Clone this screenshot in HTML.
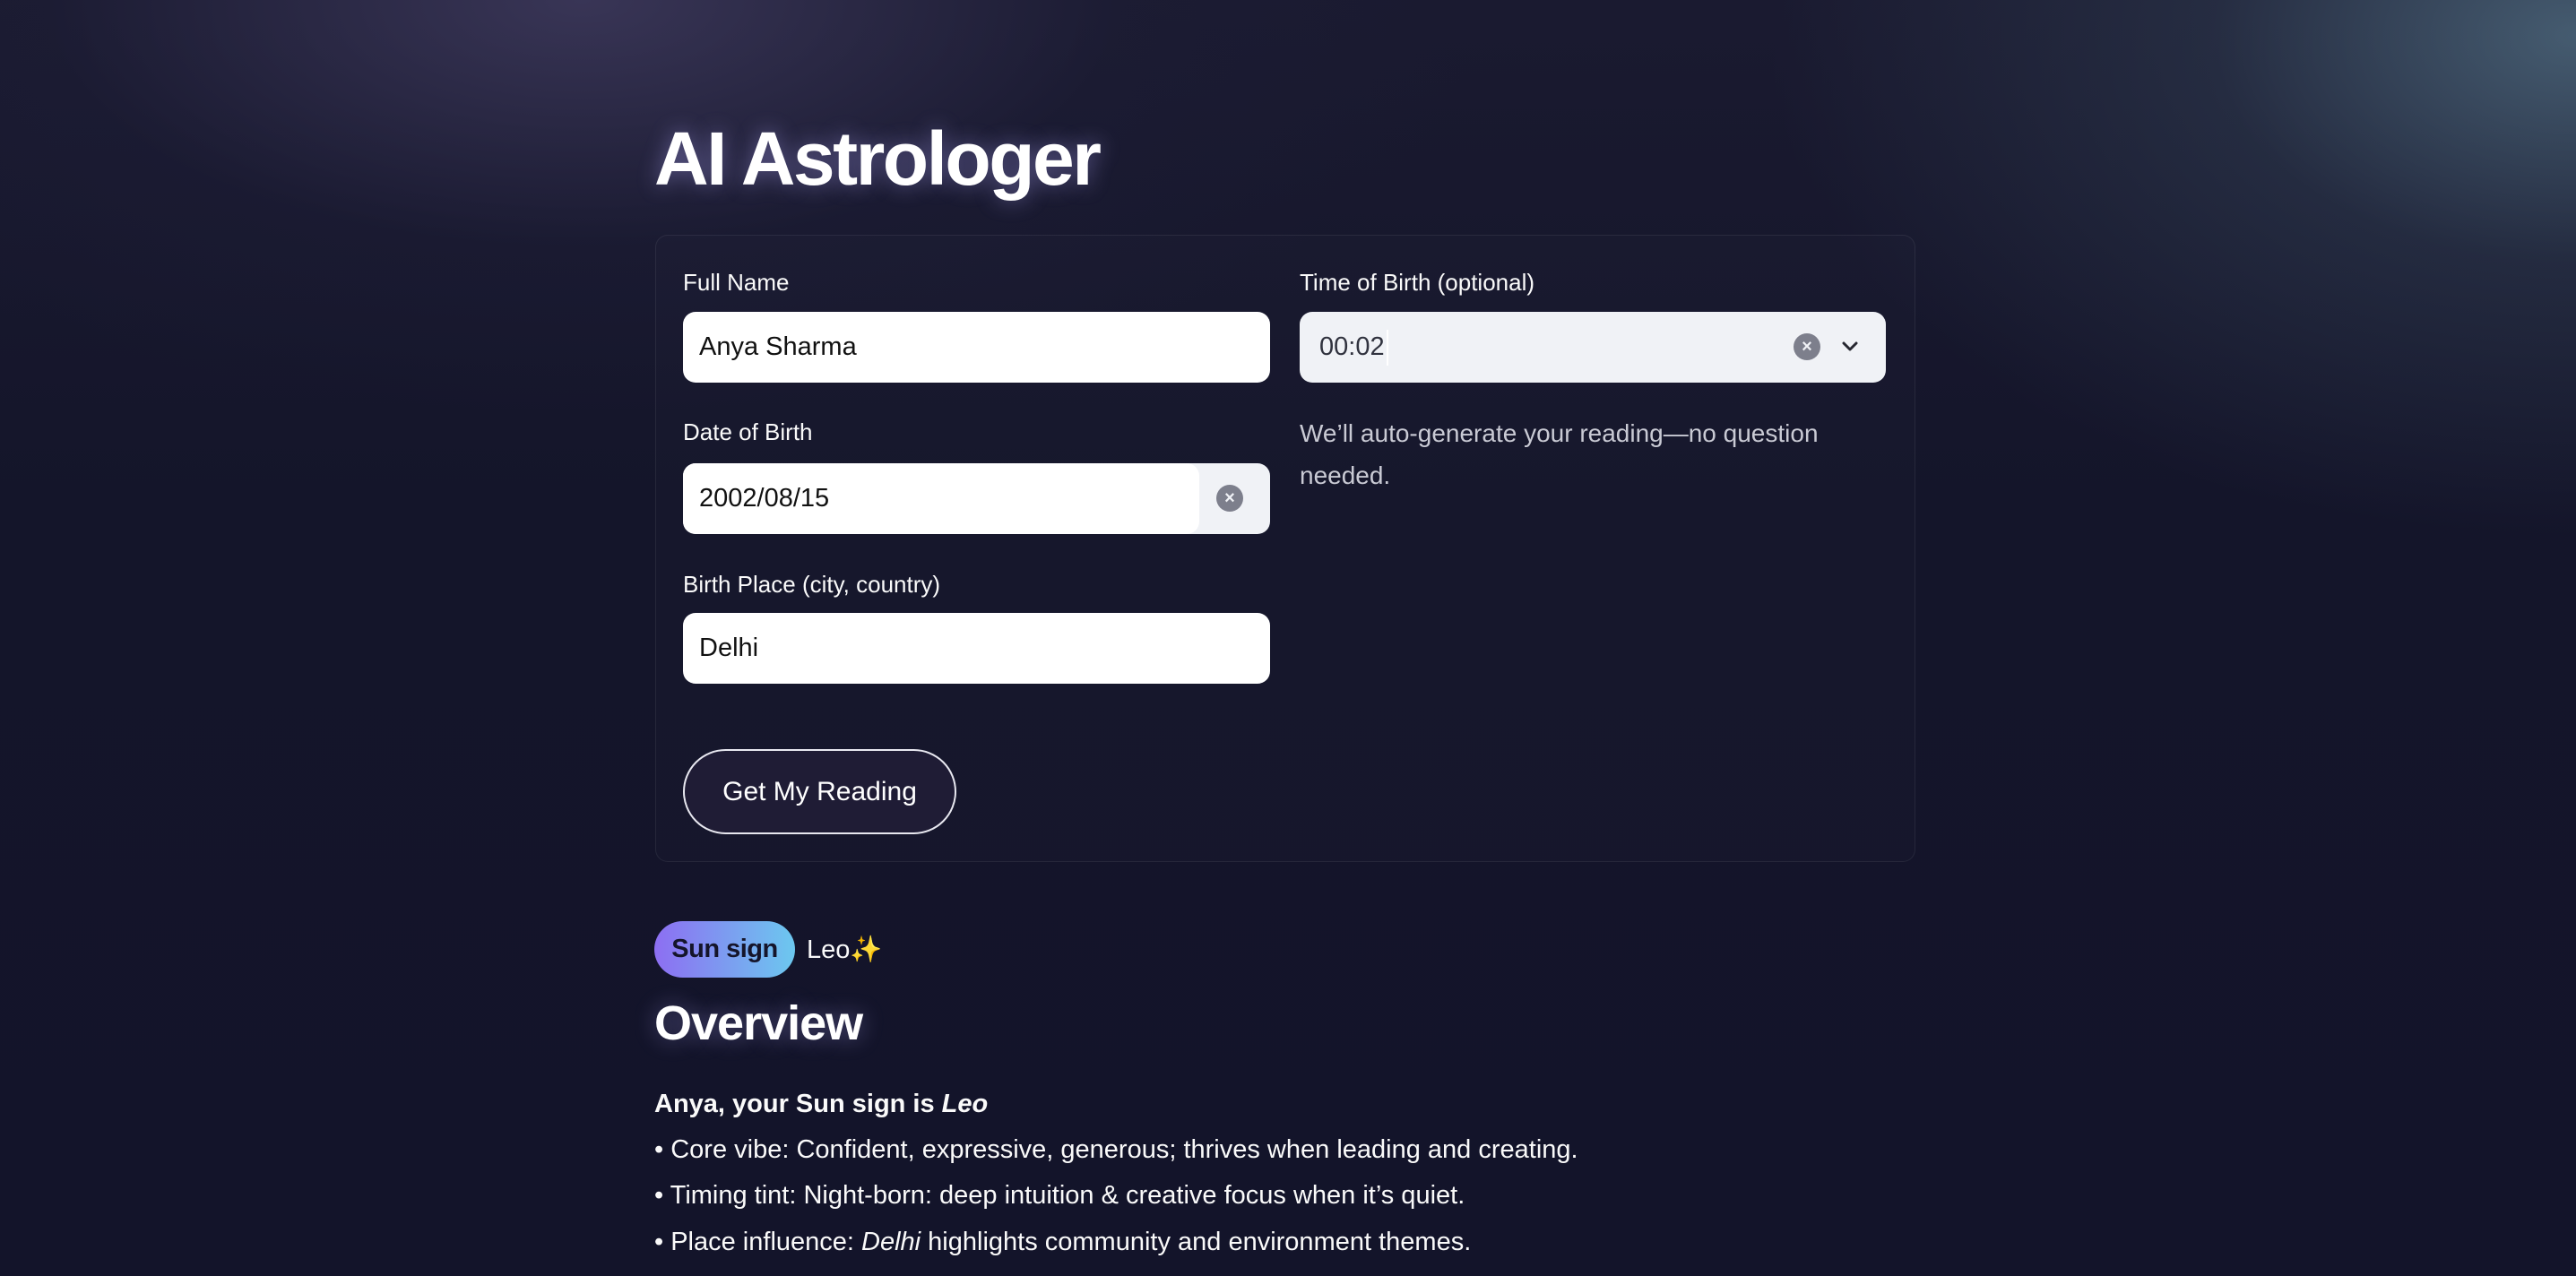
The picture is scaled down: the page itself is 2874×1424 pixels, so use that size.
<!DOCTYPE html>
<html><head><meta charset="utf-8"><style>
*{box-sizing:border-box;margin:0;padding:0}
html,body{width:2874px;height:1424px;overflow:hidden}
body{font-family:"Liberation Sans",sans-serif;color:#fff;
background:
radial-gradient(ellipse 900px 560px at 2874px 40px, rgba(80,108,128,.8), rgba(55,72,92,.4) 45%, rgba(20,22,40,0) 100%),
radial-gradient(ellipse 1000px 460px at 650px 0px, rgba(60,56,90,.9), rgba(30,30,55,.4) 60%, rgba(20,20,40,0) 100%),
linear-gradient(180deg,#1a1a30 0%,#14152a 40%,#13142a 100%);
position:relative}
.abs{position:absolute}
h1{position:absolute;left:730px;top:122px;font-size:84px;letter-spacing:-2.5px;font-weight:bold;line-height:110px;text-shadow:0 0 24px rgba(180,170,255,.45)}
.card{position:absolute;left:731px;top:262px;width:1406px;height:700px;border:1px solid rgba(255,255,255,.07);border-radius:14px;background:rgba(255,255,255,.012)}
.lbl{position:absolute;font-size:26px;color:#fafafa;line-height:32px}
.inp{position:absolute;height:79px;border-radius:14px;background:#fff;color:#111;font-size:29px;line-height:79px;padding-left:18px}
.help{position:absolute;left:1450px;top:460px;width:620px;font-size:28px;line-height:47px;color:#c9cad4}
.btn{position:absolute;left:762px;top:836px;width:305px;height:95px;border:2px solid #e8e8f0;border-radius:48px;background:#1f1c35;font-size:30px;line-height:91px;text-align:center;color:#fff}
.pill{position:absolute;left:730px;top:1028px;width:157px;height:63px;border-radius:32px;background:linear-gradient(90deg,#8d6ef2,#6cc8ef);color:#15152b;font-weight:bold;font-size:29px;line-height:63px;text-align:center;letter-spacing:-.5px}
h2{position:absolute;left:730px;top:1108px;font-size:54px;line-height:68px;font-weight:bold;letter-spacing:-1px;text-shadow:0 0 24px rgba(180,170,255,.4)}
.p{position:absolute;left:730px;font-size:29px;line-height:40px;color:#fafafa;white-space:nowrap}
.x{position:absolute;width:30px;height:30px;border-radius:50%;background:#7d7f8c;color:#f0f2f6;font-size:20px;line-height:30px;text-align:center;font-weight:bold}
</style></head><body>
<h1>AI Astrologer</h1>
<div class="card"></div>
<div class="lbl" style="left:762px;top:299px">Full Name</div>
<div class="inp" style="left:762px;top:348px;width:655px">Anya Sharma</div>
<div class="lbl" style="left:762px;top:466px">Date of Birth</div>
<div class="inp" style="left:762px;top:517px;width:655px;background:#f0f2f6;padding:0">
 <div style="position:absolute;left:0;top:0;width:576px;height:79px;background:#fff;border-radius:14px;padding-left:18px">2002/08/15</div>
</div>
<div class="x" style="left:1357px;top:541px">×</div>
<div class="lbl" style="left:762px;top:636px">Birth Place (city, country)</div>
<div class="inp" style="left:762px;top:684px;width:655px">Delhi</div>
<div class="lbl" style="left:1450px;top:299px">Time of Birth (optional)</div>
<div class="inp" style="left:1450px;top:348px;width:654px;background:#f0f2f6;color:#31333f;padding-left:22px">00:02<span style="display:inline-block;width:2px;height:40px;background:#fff;vertical-align:middle;margin-left:2px"></span></div>
<div class="x" style="left:2001px;top:372px">×</div>
<svg class="abs" style="left:2052px;top:377px" width="24" height="20" viewBox="0 0 24 20"><path d="M5 6l7 7 7-7" fill="none" stroke="#262730" stroke-width="3" stroke-linecap="round" stroke-linejoin="round"/></svg>
<div class="help">We’ll auto-generate your reading—no question needed.</div>
<div class="btn">Get My Reading</div>
<div class="pill">Sun sign</div>
<div class="p" style="left:900px;top:1040px">Leo<span style="color:#f6c84a">✨</span></div>
<h2>Overview</h2>
<div class="p" style="top:1212px"><b>Anya, your Sun sign is <i>Leo</i></b></div>
<div class="p" style="top:1263px">• Core vibe: Confident, expressive, generous; thrives when leading and creating.</div>
<div class="p" style="top:1314px">• Timing tint: Night-born: deep intuition &amp; creative focus when it’s quiet.</div>
<div class="p" style="top:1366px">• Place influence: <i>Delhi</i> highlights community and environment themes.</div>
</body></html>
